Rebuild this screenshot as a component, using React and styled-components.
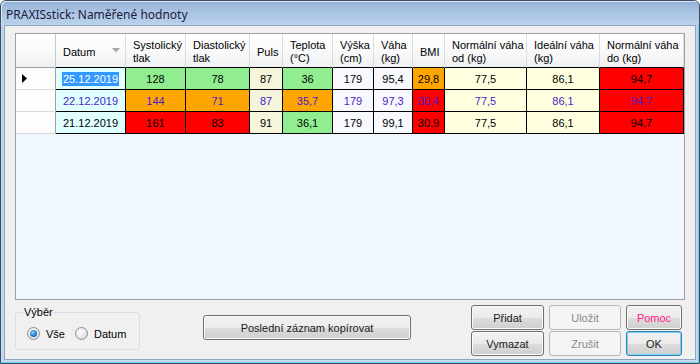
import React from "react";
import styled, { createGlobalStyle } from "styled-components";

const Global = createGlobalStyle`
  html, body { margin: 0; padding: 0; background: #fff; }
  body { font-family: "Liberation Sans", Arial, sans-serif; font-size: 11px; }
  * { box-sizing: border-box; }
`;

const Window = styled.div`
  width: 700px;
  height: 364px;
  display: flex;
  flex-direction: column;
  background: linear-gradient(#bcd3ec, #c4d8ee);
  border: 1px solid #3e4d5f;
  border-radius: 6px 6px 0 0;
  box-shadow: inset -1px -1px 0 #5fd3f0;
  overflow: hidden;
`;

const TitleBar = styled.div`
  height: 24px;
  flex: none;
  display: flex;
  align-items: center;
  padding-left: 5px;
  padding-top: 2px;
  background: linear-gradient(#93b0d4 0%, #a9c3e2 45%, #bad2ec 100%);
  color: #1c1c3a;
  font-family: "Noto Sans", "Liberation Sans", sans-serif;
  font-size: 12px;
  border-radius: 5px 5px 0 0;
  box-shadow: inset 1px 1px 0 #d7e5f4;
`;

const Client = styled.div`
  flex: 1;
  margin: 0 3px 3px 3px;
  background: #f0f0f0;
  border: 1px solid #8ea4c0;
  padding: 7px 12px 0 10px;
  display: flex;
  flex-direction: column;
`;

const GridBox = styled.div`
  width: 670px;
  height: 267px;
  border: 1px solid #a0a0a0;
  background: #f0f7fe;
  flex: none;
`;

const Table = styled.div`
  display: grid;
  grid-template-columns: ${(p) => p.$cols.map((c) => `${c}px`).join(" ")};
  grid-auto-rows: 22px;
  grid-template-rows: 34px;
`;

const HeadCell = styled.div`
  background: linear-gradient(#ffffff 0%, #f7f8f9 60%, #eef0f2 100%);
  border-right: 1px solid ${(p) => (p.$corner ? "#c8c8c8" : "#dcdcdc")};
  border-bottom: 1px solid ${(p) => (p.$corner ? "#a0a0a0" : "#000")};
  padding: 3px 0 0 7px;
  display: flex;
  align-items: center;
  justify-content: space-between;
  color: #000;
  line-height: 13px;
  white-space: pre;
`;

const SortGlyph = styled.svg`
  margin-right: 5px;
  margin-top: -3px;
  flex: none;
`;

const RowHead = styled.div`
  background: #fdfdfd;
  border-right: 1px solid #a0a0a0;
  border-bottom: 1px solid #d8d8d8;
  display: flex;
  align-items: center;
  padding-left: 6px;
`;

const Cell = styled.div`
  background: ${(p) => p.$bg};
  color: ${(p) => p.$fg};
  border-right: 1px solid #000;
  border-bottom: 1px solid #000;
  display: flex;
  align-items: center;
  justify-content: center;
  font-size: 11px;
`;

const Selected = styled.span`
  background: #3399ff;
  color: #fff;
  padding: 1px 1px;
`;

const BottomBar = styled.div`
  display: flex;
  align-items: flex-start;
  margin-top: 5px;
  height: 51px;
`;

const Group = styled.fieldset`
  margin: 1px 0 0 0;
  width: 125px;
  height: 44px;
  border: 1px solid #d5dfe5;
  border-radius: 3px;
  padding: 0;
  min-width: 0;
`;

const Legend = styled.legend`
  padding: 0 1px;
  margin-left: 7px;
  color: #000;
  line-height: 13px;
`;

const RadioRow = styled.div`
  display: flex;
  align-items: center;
  gap: 10px;
  padding: 8px 0 0 11px;
`;

const RadioLabel = styled.label`
  display: flex;
  align-items: center;
  gap: 6px;
  color: #000;
`;

const RadioCircle = styled.span`
  width: 13px;
  height: 13px;
  border-radius: 50%;
  border: 1px solid #8f8f8f;
  background: radial-gradient(circle at 40% 35%, #ffffff 0%, #e6e6e6 55%, #cfcfcf 100%);
  display: flex;
  align-items: center;
  justify-content: center;
  flex: none;
`;

const RadioDot = styled.span`
  width: 7px;
  height: 7px;
  border-radius: 50%;
  background: radial-gradient(circle at 40% 35%, #8fd0ff 0%, #2b7fd0 50%, #0f4a8c 100%);
`;

const Button = styled.button`
  font-family: "Liberation Sans", Arial, sans-serif;
  font-size: 11px;
  font-weight: 400;
  width: ${(p) => p.$w}px;
  height: 25px;
  padding: 0;
  border-radius: 3px;
  border: 1px solid ${(p) => (p.disabled ? "#b4b8bb" : p.$default ? "#3c7fb1" : "#707070")};
  color: ${(p) => (p.disabled ? "#8a8a8a" : p.$fg || "#1a1a1a")};
  background: ${(p) =>
    p.disabled
      ? "#f4f4f4"
      : "linear-gradient(#f2f2f2 0%, #ebebeb 50%, #dddddd 51%, #cfcfcf 100%)"};
  box-shadow: inset 0 0 0 1px ${(p) => (p.disabled ? "#f4f4f4" : p.$default ? "#6fd6f6" : "#fbfbfb")};
  cursor: default;
`;

const CopyButton = styled(Button)`
  margin: 10px 0 0 63px;
`;

const ButtonGrid = styled.div`
  margin-left: auto;
  margin-right: 1px;
  display: grid;
  grid-template-columns: 73px 72px 56px;
  grid-template-rows: 25px 25px;
  column-gap: 5px;
  row-gap: 1px;
`;

const cols = [40, 70, 60, 64, 33, 50, 41, 39, 32, 82, 73, 84];

const headers = [
  "Datum",
  "Systolický\ntlak",
  "Diastolický\ntlak",
  "Puls",
  "Teplota\n(°C)",
  "Výška\n(cm)",
  "Váha\n(kg)",
  "BMI",
  "Normální váha\nod (kg)",
  "Ideální váha\n(kg)",
  "Normální váha\ndo (kg)",
];

const G = "#90ee90";
const O = "#ffa500";
const R = "#ff0000";
const C = "#e0ffff";
const B = "#f5f5dc";
const W = "#f8f8ff";
const Y = "#ffffe0";

const rows = [
  {
    fg: "#000",
    selected: true,
    cells: [
      ["25.12.2019", C], ["128", G], ["78", G], ["87", B], ["36", G], ["179", W],
      ["95,4", W], ["29,8", O], ["77,5", Y], ["86,1", Y], ["94,7", R],
    ],
  },
  {
    fg: "#4a1cc8",
    cells: [
      ["22.12.2019", C], ["144", O], ["71", O], ["87", B], ["35,7", O], ["179", W],
      ["97,3", W], ["30,4", R], ["77,5", Y], ["86,1", Y], ["94,7", R],
    ],
  },
  {
    fg: "#000",
    cells: [
      ["21.12.2019", C], ["161", R], ["83", R], ["91", B], ["36,1", G], ["179", W],
      ["99,1", W], ["30,9", R], ["77,5", Y], ["86,1", Y], ["94,7", R],
    ],
  },
];

function Radio({ checked, label }) {
  return (
    <RadioLabel>
      <RadioCircle>{checked && <RadioDot />}</RadioCircle>
      {label}
    </RadioLabel>
  );
}

export default function App() {
  return (
    <>
      <Global />
      <Window>
        <TitleBar>PRAXISstick: Naměřené hodnoty</TitleBar>
        <Client>
          <GridBox>
            <Table $cols={cols}>
              <HeadCell $corner />
              {headers.map((h, i) => (
                <HeadCell key={i}>
                  <span>{h}</span>
                  {i === 0 && (
                    <SortGlyph width="8" height="5" viewBox="0 0 8 5">
                      <polygon points="0,0 8,0 4,4.5" fill="#a7a7a7" />
                    </SortGlyph>
                  )}
                </HeadCell>
              ))}
              {rows.map((r, ri) => (
                <React.Fragment key={ri}>
                  <RowHead>
                    {r.selected && (
                      <svg width="5" height="9" viewBox="0 0 5 9">
                        <polygon points="0,0 5,4.5 0,9" fill="#000" />
                      </svg>
                    )}
                  </RowHead>
                  {r.cells.map(([v, bg], ci) => (
                    <Cell key={ci} $bg={bg} $fg={r.fg}>
                      {r.selected && ci === 0 ? <Selected>{v}</Selected> : v}
                    </Cell>
                  ))}
                </React.Fragment>
              ))}
            </Table>
          </GridBox>
          <BottomBar>
            <Group>
              <Legend>Výběr</Legend>
              <RadioRow>
                <Radio checked label="Vše" />
                <Radio label="Datum" />
              </RadioRow>
            </Group>
            <CopyButton $w={208}>Poslední záznam kopírovat</CopyButton>
            <ButtonGrid>
              <Button $w={73}>Přidat</Button>
              <Button $w={72} disabled>Uložit</Button>
              <Button $w={56} $fg="#ff1c8c">Pomoc</Button>
              <Button $w={73}>Vymazat</Button>
              <Button $w={72} disabled>Zrušit</Button>
              <Button $w={56} $default>OK</Button>
            </ButtonGrid>
          </BottomBar>
        </Client>
      </Window>
    </>
  );
}
